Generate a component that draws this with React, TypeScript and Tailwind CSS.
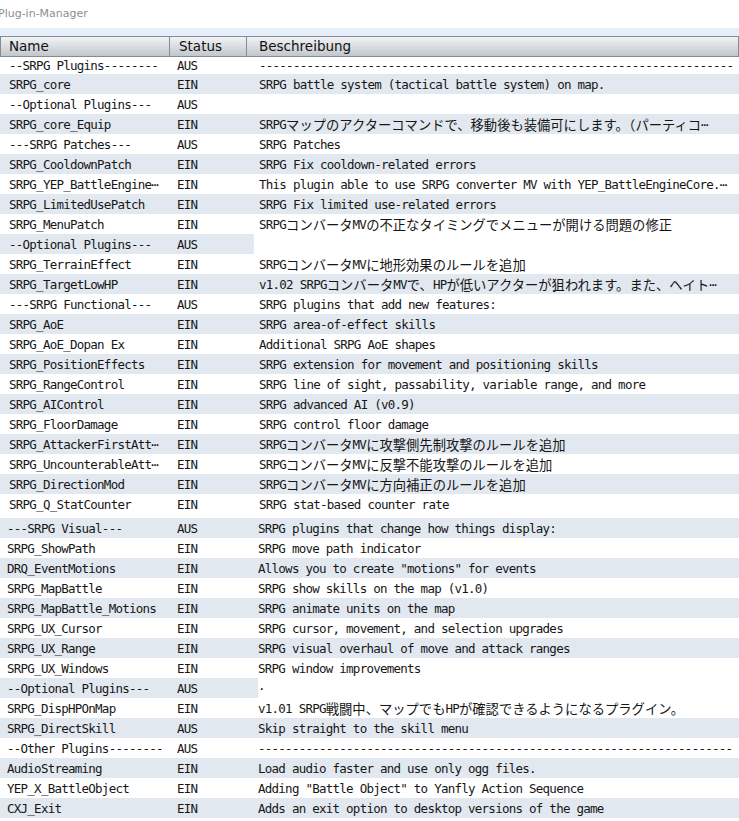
import React from 'react';

type Plugin = { name: string; status: string; desc: string; partial?: boolean };

const DASHES = '-'.repeat(70);

// first block of the list
const teil1: Plugin[] = [
  { name: '--SRPG Plugins--------', status: 'AUS', desc: DASHES },
  { name: 'SRPG_core', status: 'EIN', desc: 'SRPG battle system (tactical battle system) on map.' },
  { name: '--Optional Plugins---', status: 'AUS', desc: '' },
  { name: 'SRPG_core_Equip', status: 'EIN', desc: 'SRPGマップのアクターコマンドで、移動後も装備可にします。（パーティコ⋯' },
  { name: '---SRPG Patches---', status: 'AUS', desc: 'SRPG Patches' },
  { name: 'SRPG_CooldownPatch', status: 'EIN', desc: 'SRPG Fix cooldown-related errors' },
  { name: 'SRPG_YEP_BattleEngine⋯', status: 'EIN', desc: 'This plugin able to use SRPG converter MV with YEP_BattleEngineCore.⋯' },
  { name: 'SRPG_LimitedUsePatch', status: 'EIN', desc: 'SRPG Fix limited use-related errors' },
  { name: 'SRPG_MenuPatch', status: 'EIN', desc: 'SRPGコンバータMVの不正なタイミングでメニューが開ける問題の修正' },
  { name: '--Optional Plugins---', status: 'AUS', desc: '', partial: true },
  { name: 'SRPG_TerrainEffect', status: 'EIN', desc: 'SRPGコンバータMVに地形効果のルールを追加' },
  { name: 'SRPG_TargetLowHP', status: 'EIN', desc: 'v1.02 SRPGコンバータMVで、HPが低いアクターが狙われます。また、ヘイト⋯' },
  { name: '---SRPG Functional---', status: 'AUS', desc: 'SRPG plugins that add new features:' },
  { name: 'SRPG_AoE', status: 'EIN', desc: 'SRPG area-of-effect skills' },
  { name: 'SRPG_AoE_Dopan Ex', status: 'EIN', desc: 'Additional SRPG AoE shapes' },
  { name: 'SRPG_PositionEffects', status: 'EIN', desc: 'SRPG extension for movement and positioning skills' },
  { name: 'SRPG_RangeControl', status: 'EIN', desc: 'SRPG line of sight, passability, variable range, and more' },
  { name: 'SRPG_AIControl', status: 'EIN', desc: 'SRPG advanced AI (v0.9)' },
  { name: 'SRPG_FloorDamage', status: 'EIN', desc: 'SRPG control floor damage' },
  { name: 'SRPG_AttackerFirstAtt⋯', status: 'EIN', desc: 'SRPGコンバータMVに攻撃側先制攻撃のルールを追加' },
  { name: 'SRPG_UncounterableAtt⋯', status: 'EIN', desc: 'SRPGコンバータMVに反撃不能攻撃のルールを追加' },
  { name: 'SRPG_DirectionMod', status: 'EIN', desc: 'SRPGコンバータMVに方向補正のルールを追加' },
  { name: 'SRPG_Q_StatCounter', status: 'EIN', desc: 'SRPG stat-based counter rate' },
];

// second block (slightly shifted in the capture)
const teil2: Plugin[] = [
  { name: '---SRPG Visual---', status: 'AUS', desc: 'SRPG plugins that change how things display:' },
  { name: 'SRPG_ShowPath', status: 'EIN', desc: 'SRPG move path indicator' },
  { name: 'DRQ_EventMotions', status: 'EIN', desc: 'Allows you to create "motions" for events' },
  { name: 'SRPG_MapBattle', status: 'EIN', desc: 'SRPG show skills on the map (v1.0)' },
  { name: 'SRPG_MapBattle_Motions', status: 'EIN', desc: 'SRPG animate units on the map' },
  { name: 'SRPG_UX_Cursor', status: 'EIN', desc: 'SRPG cursor, movement, and selection upgrades' },
  { name: 'SRPG_UX_Range', status: 'EIN', desc: 'SRPG visual overhaul of move and attack ranges' },
  { name: 'SRPG_UX_Windows', status: 'EIN', desc: 'SRPG window improvements' },
  { name: '--Optional Plugins---', status: 'AUS', desc: '·', partial: true },
  { name: 'SRPG_DispHPOnMap', status: 'EIN', desc: 'v1.01 SRPG戦闘中、マップでもHPが確認できるようになるプラグイン。' },
  { name: 'SRPG_DirectSkill', status: 'AUS', desc: 'Skip straight to the skill menu' },
  { name: '--Other Plugins--------', status: 'AUS', desc: DASHES },
  { name: 'AudioStreaming', status: 'EIN', desc: 'Load audio faster and use only ogg files.' },
  { name: 'YEP_X_BattleObject', status: 'EIN', desc: 'Adding "Battle Object" to Yanfly Action Sequence' },
  { name: 'CXJ_Exit', status: 'EIN', desc: 'Adds an exit option to desktop versions of the game' },
];

// CJK runs are drawn a bit larger, like the fallback font in the original
function Beschreibung({ text }: { text: string }) {
  const parts = text.split(/([\u3000-\u30ff\u4e00-\u9fff\uff00-\uffef]+)/);
  return (
    <>
      {parts.map((p, i) =>
        i % 2 === 1 ? (
          <span key={i} className="font-['Noto_Sans_CJK_JP',sans-serif] text-[13.3px] tracking-normal">{p}</span>
        ) : (
          <span key={i}>{p}</span>
        )
      )}
    </>
  );
}

function Zeile({ p, shaded, shifted, extra }: { p: Plugin; shaded: boolean; shifted?: boolean; extra?: string }) {
  const bg = shaded ? 'bg-[#e2e8ef]' : 'bg-white';
  const descBg = shaded && !p.partial ? 'bg-[#e2e8ef]' : 'bg-white';
  return (
    <div className={`flex items-center h-[20px] whitespace-nowrap ${extra ?? ''}`}>
      <div className={`flex h-full items-center pt-[2px] ${bg} ${shifted ? 'w-[258px]' : 'w-[254px]'}`}>
        <div className={shifted ? 'w-[170px] pl-[7px]' : 'w-[170px] pl-[9px]'}>{p.name}</div>
        <div className="pl-[7px]">{p.status}</div>
      </div>
      <div className={`flex-1 h-full flex items-center pt-[2px] overflow-hidden ${descBg} ${shifted ? 'pl-[-1px]' : 'pl-[5px]'}`}>
        <Beschreibung text={p.desc} />
      </div>
    </div>
  );
}

export default function App() {
  return (
    <div className="w-[739px] h-[821px] bg-white overflow-hidden text-[#161616]">
      <div className="h-[28px] flex items-center">
        <span className="ml-[-2px] font-['DejaVu_Sans',sans-serif] text-[11px] text-[#8e8e8e]">Plug-in-Manager</span>
      </div>
      <div className="h-[8px] bg-[#e6eefa]" />

      {/* Kopfzeile */}
      <div className="flex h-[21px] w-[739px] border border-[#838b95] bg-gradient-to-b from-[#f2f3f5] to-[#c2c7cd] font-['DejaVu_Sans',sans-serif] text-[13.5px] text-[#111]">
        <div className="w-[169px] pl-[8px] flex items-center border-r border-[#838b95]">Name</div>
        <div className="w-[77px] pl-[9px] flex items-center border-r border-[#838b95]">Status</div>
        <div className="flex-1 pl-[12px] flex items-center">Beschreibung</div>
      </div>

      <div className="font-['DejaVu_Sans_Mono',monospace] text-[12.5px] tracking-[-0.75px] leading-none">
        {teil1.map((p, i) => (
          <Zeile key={i} p={p} shaded={i % 2 === 1} extra={i === 0 ? '!h-[17px]' : ''} />
        ))}
        {teil2.map((p, i) => (
          <Zeile
            key={`b${i}`}
            p={p}
            shaded={i % 2 === 0}
            shifted
            extra={i === 0 ? '!h-[24px] pt-[4px]' : ''}
          />
        ))}
      </div>
    </div>
  );
}
